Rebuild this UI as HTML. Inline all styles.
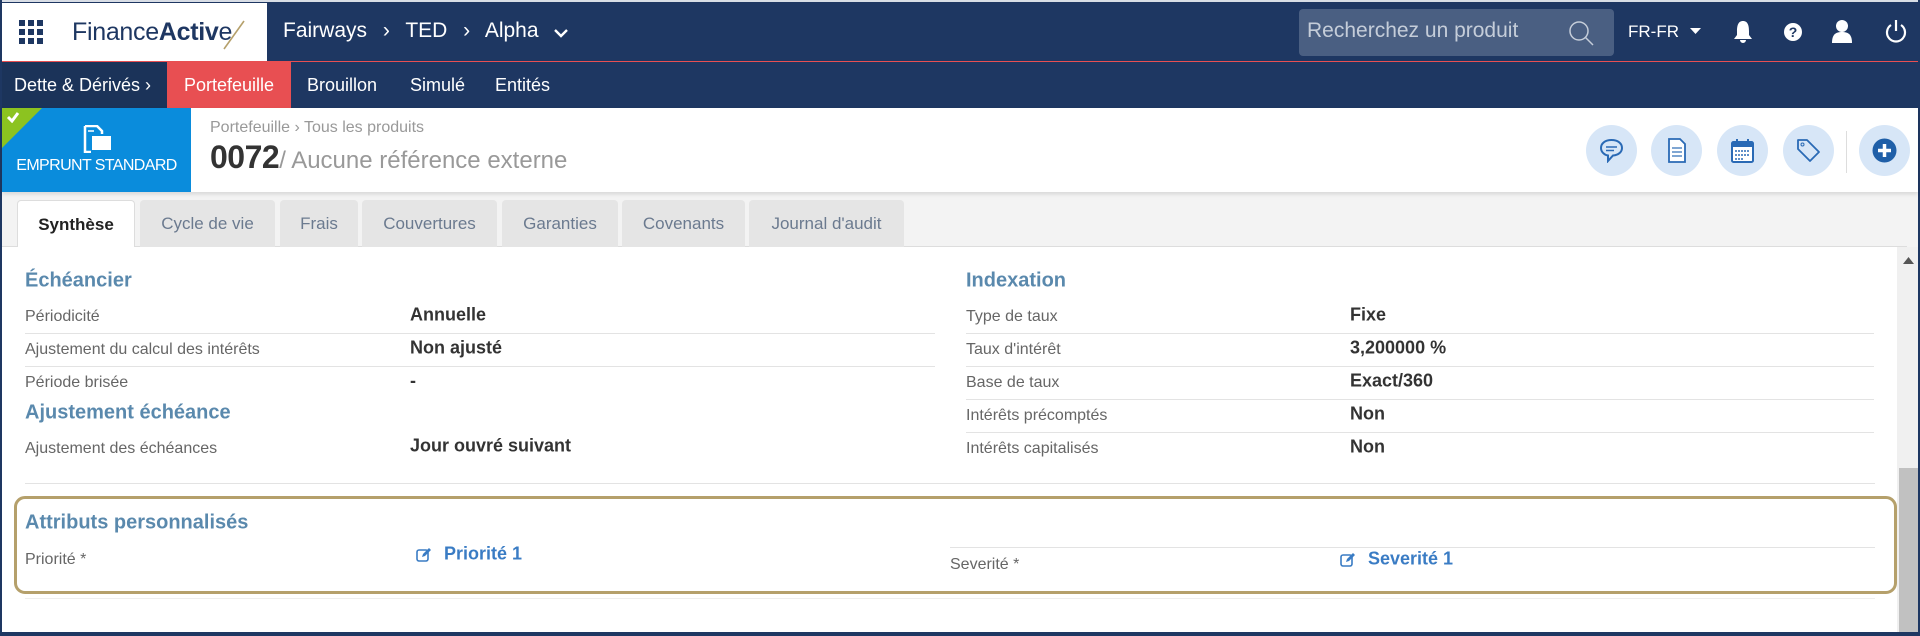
<!DOCTYPE html>
<html><head><meta charset="utf-8"><style>
*{box-sizing:border-box;margin:0;padding:0}
body{width:1920px;height:636px;position:relative;overflow:hidden;background:#1e3762;font-family:"Liberation Sans",sans-serif}
.a{position:absolute;white-space:nowrap}
.lbl{position:absolute;font-size:16px;color:#666;transform:translateY(-50%);white-space:nowrap}
.val{position:absolute;font-size:18px;font-weight:bold;color:#333;transform:translateY(-50%);white-space:nowrap}
.sep{position:absolute;height:1px;background:#e3e3e3}
.h{position:absolute;font-size:20px;font-weight:bold;color:#5a89ad;transform:translateY(-50%);white-space:nowrap}
.tab{position:absolute;top:200px;height:47px;background:#e5e5e5;border-radius:4px 4px 0 0;font-size:17px;color:#6b7a8f;text-align:center;line-height:47px}
.circ{position:absolute;top:125px;width:51px;height:51px;border-radius:50%;background:#d7e6f7}
.circ svg{position:absolute;left:13px;top:13px}
.nav{position:absolute;top:62px;height:46px;line-height:46px;font-size:18px;color:#fff;white-space:nowrap}
</style></head><body>
<div class="a" style="left:0;top:0;width:1920px;height:2px;background:#d8dde5"></div>
<div class="a" style="left:2px;top:2px;width:1916px;height:60px;background:#1e3762"></div>
<div class="a" style="left:2px;top:3px;width:265px;height:59px;background:#fff"></div>
<svg class="a" style="left:19px;top:20px" width="25" height="25" viewBox="0 0 25 25" fill="#1e3762">
<rect x="0" y="0" width="6" height="6"/><rect x="9" y="0" width="6" height="6"/><rect x="18" y="0" width="6" height="6"/>
<rect x="0" y="9" width="6" height="6"/><rect x="9" y="9" width="6" height="6"/><rect x="18" y="9" width="6" height="6"/>
<rect x="0" y="18" width="6" height="6"/><rect x="9" y="18" width="6" height="6"/><rect x="18" y="18" width="6" height="6"/></svg>
<div class="a" style="left:72px;top:18px;font-size:25px;color:#1e3762;letter-spacing:-0.3px">Finance<b style="font-weight:bold">Activ</b>e</div>
<svg class="a" style="left:222px;top:18px" width="24" height="32"><line x1="2" y1="31" x2="22" y2="3" stroke="#b5a06b" stroke-width="1.6"/></svg>
<div class="a" style="left:283px;top:19px;font-size:21px;color:#fff">Fairways <span style="margin:0 10px">&#x203A;</span> TED <span style="margin:0 10px">&#x203A;</span> Alpha</div>
<svg class="a" style="left:554px;top:28px" width="14" height="10"><polyline points="1,2 7,8 13,2" fill="none" stroke="#fff" stroke-width="2.4"/></svg>
<div class="a" style="left:1299px;top:9px;width:315px;height:47px;background:#4a5f82;border-radius:4px"></div>
<div class="a" style="left:1307px;top:19px;font-size:21px;color:#c5cdd9">Recherchez un produit</div>
<svg class="a" style="left:1568px;top:20px" width="26" height="26"><circle cx="11" cy="11" r="9" fill="none" stroke="#c5cdd9" stroke-width="1.5"/><line x1="17" y1="17" x2="25" y2="25" stroke="#c5cdd9" stroke-width="1.5"/></svg>
<div class="a" style="left:1628px;top:22px;font-size:17px;color:#fff">FR-FR</div>
<svg class="a" style="left:1690px;top:28px" width="11" height="7"><polygon points="0,0 11,0 5.5,6" fill="#fff"/></svg>
<svg class="a" style="left:1733px;top:20px" width="20" height="24"><path d="M10 1 C5 1 4 6 4 11 L4 15 L1 19 L19 19 L16 15 L16 11 C16 6 15 1 10 1Z M7 20 A3 3 0 0 0 13 20Z" fill="#fff"/></svg>
<svg class="a" style="left:1783px;top:22px" width="20" height="20"><circle cx="10" cy="10" r="9" fill="#fff"/><text x="10" y="15" font-size="14" font-weight="bold" text-anchor="middle" fill="#1e3762" font-family="Liberation Sans">?</text></svg>
<svg class="a" style="left:1831px;top:19px" width="22" height="24"><circle cx="11" cy="7" r="6" fill="#fff"/><path d="M1 24 C1 15 5 13 11 13 C17 13 21 15 21 24Z" fill="#fff"/></svg>
<svg class="a" style="left:1885px;top:19px" width="22" height="24"><path d="M6 6 A9 9 0 1 0 16 6" fill="none" stroke="#fff" stroke-width="2.2"/><line x1="11" y1="1" x2="11" y2="12" stroke="#fff" stroke-width="2.2"/></svg>
<div class="a" style="left:2px;top:61px;width:1916px;height:1px;background:#e84f52"></div>
<div class="a" style="left:2px;top:62px;width:1916px;height:46px;background:#1e3762"></div>
<div class="nav" style="left:2px;width:165px;background:#1b3359;padding-left:12px">Dette &amp; Dérivés &#x203A;</div>
<div class="nav" style="left:167px;width:124px;background:#e84f52;text-align:center">Portefeuille</div>
<div class="nav" style="left:307px">Brouillon</div>
<div class="nav" style="left:410px">Simulé</div>
<div class="nav" style="left:495px">Entités</div>
<div class="a" style="left:2px;top:108px;width:1916px;height:84px;background:#fff;box-shadow:0 2px 4px rgba(0,0,0,.12);z-index:2"></div>
<div class="a" style="left:2px;top:108px;width:189px;height:84px;background:#0a8cdc;z-index:3;overflow:hidden">
<div style="position:absolute;left:0;top:0;width:0;height:0;border-top:40px solid #8cc320;border-right:40px solid transparent"></div>
<svg style="position:absolute;left:4px;top:3px" width="14" height="12"><polyline points="2,6 6,10 12,2" fill="none" stroke="#fff" stroke-width="3"/></svg>
<svg style="position:absolute;left:81px;top:17px" width="30" height="28"><path d="M2 1 L14 1 L19 6 L19 9 M2 1 L2 27 L8 27" fill="none" stroke="#fff" stroke-width="2.5"/><rect x="9" y="11" width="19" height="14" fill="#fff"/><line x1="5" y1="6" x2="11" y2="6" stroke="#fff" stroke-width="1.5"/></svg>
<div style="position:absolute;left:0;width:189px;top:49px;text-align:center;font-size:16px;color:#fff;letter-spacing:-0.6px">EMPRUNT STANDARD</div>
</div>
<div class="a" style="left:210px;top:119px;font-size:16px;color:#999;z-index:3">Portefeuille &#x203A; Tous les produits</div>
<div class="a" style="left:210px;top:139px;font-size:32px;font-weight:bold;color:#333;z-index:3;letter-spacing:-0.5px">0072<span style="font-size:24px;font-weight:normal;color:#999;letter-spacing:0">/ Aucune référence externe</span></div>
<div style="position:absolute;left:0;top:0;z-index:3">
<div class="circ" style="left:1586px"><svg width="25" height="25"><path d="M12.5 2 C6 2 2 5.5 2 10 C2 14 5.5 17 9 17.5 L9 23 L14 17.5 C19.5 17 23 14 23 10 C23 5.5 19 2 12.5 2Z" fill="none" stroke="#2a6ab5" stroke-width="2"/><line x1="7" y1="9" x2="18" y2="9" stroke="#2a6ab5" stroke-width="1.5"/><line x1="7" y1="12.5" x2="15" y2="12.5" stroke="#2a6ab5" stroke-width="1.5"/></svg></div>
<div class="circ" style="left:1651px"><svg width="25" height="25"><path d="M5 1 L16 1 L21 6 L21 24 L5 24Z" fill="#fff" stroke="#2a6ab5" stroke-width="1.8"/><line x1="8" y1="10" x2="18" y2="10" stroke="#2a6ab5" stroke-width="1.2"/><line x1="8" y1="14" x2="18" y2="14" stroke="#2a6ab5" stroke-width="1.2"/><line x1="8" y1="18" x2="18" y2="18" stroke="#2a6ab5" stroke-width="1.2"/></svg></div>
<div class="circ" style="left:1717px"><svg width="25" height="25"><rect x="2" y="4" width="21" height="20" rx="1.5" fill="#fff" stroke="#2a6ab5" stroke-width="2"/><rect x="2" y="4" width="21" height="5" fill="#2a6ab5"/><line x1="7" y1="1" x2="7" y2="6" stroke="#2a6ab5" stroke-width="2"/><line x1="18" y1="1" x2="18" y2="6" stroke="#2a6ab5" stroke-width="2"/><g stroke="#2a6ab5" stroke-width="1.5" stroke-dasharray="2 1"><line x1="5" y1="13" x2="20" y2="13"/><line x1="5" y1="17" x2="20" y2="17"/><line x1="5" y1="21" x2="14" y2="21"/></g></svg></div>
<div class="circ" style="left:1783px"><svg width="25" height="25"><path d="M2 2 L11 2 L23 14 L14 23 L2 11Z" fill="none" stroke="#2a6ab5" stroke-width="1.8" stroke-linejoin="round"/><circle cx="6.5" cy="6.5" r="1.5" fill="none" stroke="#2a6ab5"/></svg></div>
<div class="a" style="left:1846px;top:131px;width:1px;height:42px;background:#ddd"></div>
<div class="circ" style="left:1859px"><svg width="25" height="25"><circle cx="12.5" cy="12.5" r="12" fill="#1f5fa8"/><line x1="12.5" y1="6" x2="12.5" y2="19" stroke="#fff" stroke-width="3.5"/><line x1="6" y1="12.5" x2="19" y2="12.5" stroke="#fff" stroke-width="3.5"/></svg></div>
</div>
<div class="a" style="left:2px;top:192px;width:1916px;height:55px;background:#f3f3f3"></div>
<div class="a" style="left:2px;top:246px;width:1905px;height:1px;background:#ddd"></div>
<div class="tab" style="left:17px;width:118px;background:#fff;color:#222;font-weight:bold;height:48px;border:1px solid #ddd;border-bottom:none">Synthèse</div>
<div class="tab" style="left:140px;width:135px">Cycle de vie</div>
<div class="tab" style="left:280px;width:78px">Frais</div>
<div class="tab" style="left:362px;width:135px">Couvertures</div>
<div class="tab" style="left:502px;width:116px">Garanties</div>
<div class="tab" style="left:622px;width:123px">Covenants</div>
<div class="tab" style="left:749px;width:155px">Journal d'audit</div>
<div class="a" style="left:2px;top:247px;width:1895px;height:385px;background:#fff"></div>
<div class="a" style="left:1897px;top:247px;width:21px;height:385px;background:#f0f0f0"></div>
<svg class="a" style="left:1903px;top:257px" width="11" height="7"><polygon points="0,7 11,7 5.5,0" fill="#555"/></svg>
<div class="a" style="left:1899px;top:468px;width:19px;height:164px;background:#c1c1c1"></div>
<div class="a" style="left:1918px;top:0;width:2px;height:636px;background:#1e3762"></div>
<div class="a" style="left:0;top:632px;width:1920px;height:4px;background:#1e3762"></div>
<div class="a" style="left:0;top:0;width:2px;height:636px;background:#1e3762"></div>

<div class="h" style="left:25px;top:281px">Échéancier</div>
<div class="lbl" style="left:25px;top:317px">Périodicité</div><div class="val" style="left:410px;top:315px">Annuelle</div>
<div class="sep" style="left:25px;top:333px;width:910px"></div>
<div class="lbl" style="left:25px;top:350px">Ajustement du calcul des intérêts</div><div class="val" style="left:410px;top:348px">Non ajusté</div>
<div class="sep" style="left:25px;top:366px;width:910px"></div>
<div class="lbl" style="left:25px;top:383px">Période brisée</div><div class="val" style="left:410px;top:381px">-</div>
<div class="h" style="left:25px;top:413px">Ajustement échéance</div>
<div class="lbl" style="left:25px;top:449px">Ajustement des échéances</div><div class="val" style="left:410px;top:446px">Jour ouvré suivant</div>

<div class="h" style="left:966px;top:281px">Indexation</div>
<div class="lbl" style="left:966px;top:317px">Type de taux</div><div class="val" style="left:1350px;top:315px">Fixe</div>
<div class="sep" style="left:966px;top:333px;width:908px"></div>
<div class="lbl" style="left:966px;top:350px">Taux d'intérêt</div><div class="val" style="left:1350px;top:348px">3,200000 %</div>
<div class="sep" style="left:966px;top:366px;width:908px"></div>
<div class="lbl" style="left:966px;top:383px">Base de taux</div><div class="val" style="left:1350px;top:381px">Exact/360</div>
<div class="sep" style="left:966px;top:399px;width:908px"></div>
<div class="lbl" style="left:966px;top:416px">Intérêts précomptés</div><div class="val" style="left:1350px;top:414px">Non</div>
<div class="sep" style="left:966px;top:432px;width:908px"></div>
<div class="lbl" style="left:966px;top:449px">Intérêts capitalisés</div><div class="val" style="left:1350px;top:447px">Non</div>

<div class="sep" style="left:25px;top:483px;width:1850px"></div>
<div class="a" style="left:14px;top:496px;width:1883px;height:98px;border:3px solid #b5a06b;border-radius:11px"></div>
<div class="h" style="left:25px;top:523px">Attributs personnalisés</div>
<div class="lbl" style="left:25px;top:560px">Priorité *</div>
<svg class="a" style="left:416px;top:547px" width="16" height="15"><rect x="1" y="3" width="11" height="11" rx="2" fill="none" stroke="#3a7cc4" stroke-width="1.6"/><path d="M6 10 L7 7 L13 1 L15 3 L9 9Z" fill="#3a7cc4"/></svg>
<div class="val" style="left:444px;top:554px;color:#3a7cc4">Priorité 1</div>
<div class="sep" style="left:950px;top:547px;width:925px"></div>
<div class="lbl" style="left:950px;top:565px">Severité *</div>
<svg class="a" style="left:1340px;top:552px" width="16" height="15"><rect x="1" y="3" width="11" height="11" rx="2" fill="none" stroke="#3a7cc4" stroke-width="1.6"/><path d="M6 10 L7 7 L13 1 L15 3 L9 9Z" fill="#3a7cc4"/></svg>
<div class="val" style="left:1368px;top:559px;color:#3a7cc4">Severité 1</div>
<div class="sep" style="left:25px;top:598px;width:1850px;background:#eee"></div>
</body></html>
